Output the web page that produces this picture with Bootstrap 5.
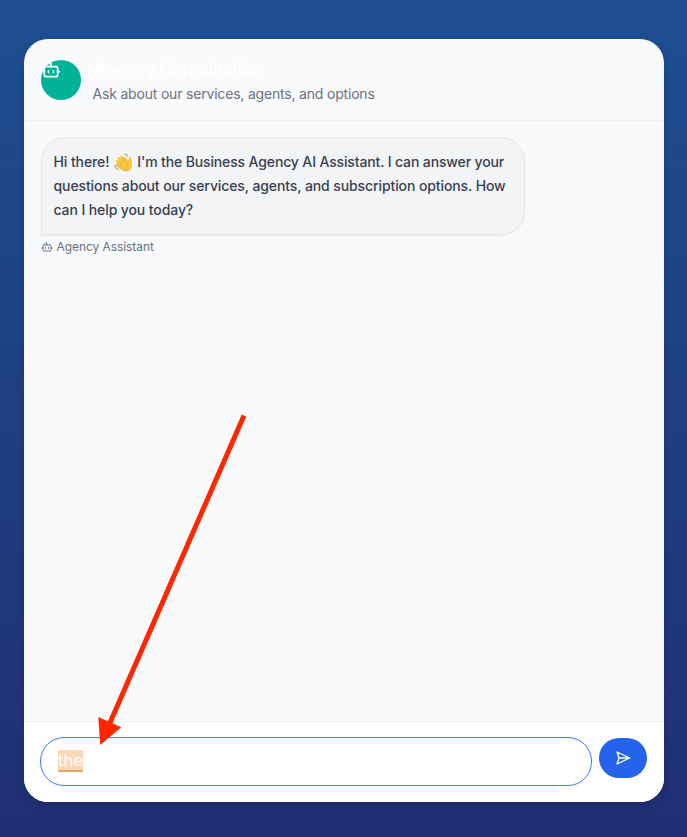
<!DOCTYPE html>
<html lang="en">
<head>
<meta charset="utf-8">
<meta name="viewport" content="width=device-width, initial-scale=1">
<title>Agency Consultation</title>
<link href="https://cdn.jsdelivr.net/npm/bootstrap@5.3.0/dist/css/bootstrap.min.css" rel="stylesheet">
<style>
body{font-family:Inter,"Liberation Sans",sans-serif;height:837px;padding:39px 23px 35px 24px;background:linear-gradient(#1d4f91,#202f73);overflow:hidden}
.chat-panel{background:#f9fafc;border-radius:24px;box-shadow:0 4px 8px rgba(0,0,0,.13)}
.chat-head{height:82px;padding:19px 17px 0;border-bottom:1px solid #f0f1f4;gap:11.5px}
.avatar{width:40px;height:40px;margin-top:2px;background:#00b398;color:#fff}
.ico{fill:none;stroke:currentColor;stroke-width:2;stroke-linecap:round;stroke-linejoin:round;display:block}
.chat-title{font-size:18px;line-height:24px;font-weight:500;color:#fff;letter-spacing:-.48px}
.chat-sub{font-size:14px;line-height:24px;color:#6b7280;letter-spacing:-.19px}
.chat-log{padding:16px 17px}
.bubble{width:484px;height:98px;padding:12px 0 0 11.5px;background:#f3f4f6;border:1px solid #e5e7eb;border-radius:24px 24px 24px 0;box-shadow:0 1px 2px rgba(0,0,0,.05);font-size:14px;line-height:24px;font-weight:500;color:#374151;white-space:nowrap;letter-spacing:-.1px}
.intro{letter-spacing:-.135px}
.wave{width:19px;height:19px;vertical-align:-5px;margin:0 .7px 0 .9px}
.sender{font-size:12px;line-height:16px;color:#6b7280;margin-top:4px;gap:3.5px;letter-spacing:-.07px}
.composer{height:81px;padding:15px 17px 0 16px;border-top:1px solid #f0f1f4;gap:7px}
.entry{height:49px;border:1px solid #3b82f6;border-radius:24px;padding:12px 17px;box-shadow:inset 0 1px 2px rgba(0,0,0,.08)}
.picked{height:22px;line-height:21px;font-size:16.5px;color:#fff;background:#fcd7b8;border-bottom:2px solid #eda56c}
.send-btn{width:48px;height:40px;margin-top:1px;border-radius:20px;background:#2563eb;color:#fff}
.pointer{left:0;top:0;pointer-events:none}
</style>
<script src="https://cdn.jsdelivr.net/npm/bootstrap@5.3.0/dist/js/bootstrap.bundle.min.js"></script>
</head>
<body class="position-relative">
<main class="chat-panel d-flex flex-column h-100 overflow-hidden">
  <header class="chat-head d-flex align-items-start">
    <div class="avatar rounded-circle flex-shrink-0 overflow-hidden">
      <svg class="ico" width="20" height="20" viewBox="0 0 24 24"><path d="M12 8V4H8M2 14h2M20 14h2M15 13v2M9 13v2"/><rect x="4" y="8" width="16" height="12" rx="2"/></svg>
    </div>
    <div>
      <h1 class="chat-title mb-0">Agency Consultation</h1>
      <p class="chat-sub mb-0">Ask about our services, agents, and options</p>
    </div>
  </header>
  <section class="chat-log flex-grow-1">
    <div class="bubble">Hi there! <svg class="wave" viewBox="0 0 19 19" role="img" aria-label="waving hand">
      <g fill="none" stroke="#a9adb2" stroke-width="1.3" stroke-linecap="round"><path d="M10.6 1.1q2.2.1 3.2 2.1M.8 12.3q.2 2.7 3.3 4.2"/></g>
      <path d="M6.3 14.8 3.1 11.5" stroke="#f5b52e" stroke-width="2.3" stroke-linecap="round"/>
      <path d="M8 12 3.2 8M9 10 4.6 5.2M11 8.5 7.6 3.8M13 9 10.4 4.9" stroke="#f9c33c" stroke-width="2.3" stroke-linecap="round"/>
      <path d="M6 8.5 11.8 5.2 14.4 8.2Q14.6 5.2 15.8 4.2 17.2 3.5 17.4 5.2L18 12.5Q17.6 17.2 13.5 18 9.7 18.6 5.4 14.6Z" fill="#fac63f"/>
      <path d="M4.7 7.8 8.2 10.9M6.7 5.2 10.4 9.1M9.6 4.9 12.3 8.2M4.7 11.3 7.5 13.6M14.4 8.2Q12.2 10.2 13.7 13" fill="none" stroke="#e8a22c" stroke-width=".55" stroke-linecap="round"/>
      <path d="M6.2 15.2Q12 20 16.1 16.2" fill="none" stroke="#eda52c" stroke-width=".8"/>
    </svg> <span class="intro">I'm the Business Agency AI Assistant. I can answer your</span><br>questions about our services, agents, and subscription options. How<br>can I help you today?</div>
    <div class="sender d-flex align-items-center">
      <svg class="ico" width="12" height="12" viewBox="0 0 24 24"><path d="M12 8V4H8M2 14h2M20 14h2M15 13v2M9 13v2"/><rect x="4" y="8" width="16" height="12" rx="2"/></svg>
      <span>Agency Assistant</span>
    </div>
  </section>
  <footer class="composer d-flex align-items-start bg-white">
    <div class="entry flex-grow-1 d-flex align-items-start bg-white"><span class="picked">the</span></div>
    <button class="send-btn btn border-0 p-0 d-flex align-items-center justify-content-center flex-shrink-0" type="button" aria-label="Send">
      <svg class="ico" width="16" height="16" viewBox="0 0 24 24"><path d="m3 3 3 9-3 9 19-9ZM6 12h16"/></svg>
    </button>
  </footer>
</main>
<svg class="pointer position-absolute" width="687" height="837" viewBox="0 0 687 837" aria-hidden="true"><path d="M244 415.5 109 725" stroke="#ff2600" stroke-width="5"/><path d="M98.3 717 121.3 727.3 100.2 745Z" fill="#ff2600"/></svg>
</body>
</html>
